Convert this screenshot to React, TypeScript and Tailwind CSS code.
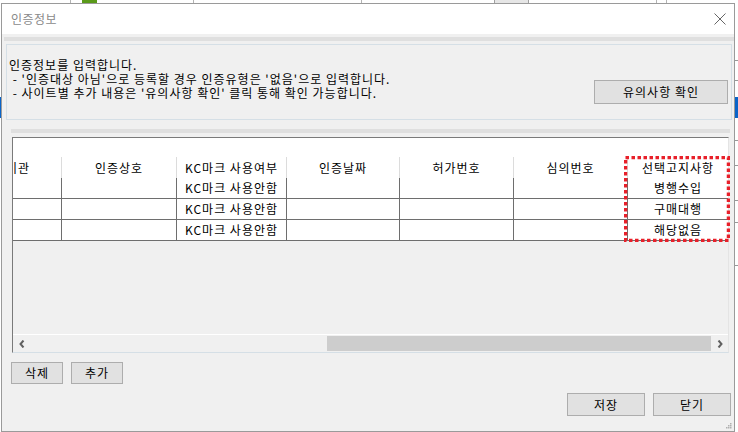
import React from 'react'

const cols = [
  { w: 'w-[49px]', head: '인증기관' },
  { w: 'w-[115px]', head: '인증상호' },
  { w: 'w-[110px]', head: 'KC마크 사용여부' },
  { w: 'w-[113px]', head: '인증날짜' },
  { w: 'w-[114px]', head: '허가번호' },
  { w: 'w-[114px]', head: '심의번호' },
  { w: 'w-[100px]', head: '선택고지사항' },
]

const rows = [
  ['', '', 'KC마크 사용안함', '', '', '', '병행수입'],
  ['', '', 'KC마크 사용안함', '', '', '', '구매대행'],
  ['', '', 'KC마크 사용안함', '', '', '', '해당없음'],
]

function Btn({ label, className }: { label: string; className: string }) {
  return (
    <button className={`flex items-center justify-center bg-[#e1e1e1] border border-[#adadad] text-[12px] tracking-[1px] text-black ${className}`}>
      {label}
    </button>
  )
}

export default function App() {
  return (
    <div className="relative w-[738px] h-[432px] bg-white overflow-hidden pl-[1px] pt-[3px] font-['Noto_Sans_CJK_KR','Noto_Sans',sans-serif]">
      {/* bits of the window behind */}
      <div className="absolute left-[70px] top-0 w-px h-[3px] bg-[#b4b4b4]" />
      <div className="absolute left-[82px] top-0 w-[15px] h-[3px] bg-[#5a9a1a]" />
      <div className="absolute left-[193px] top-0 w-px h-[3px] bg-[#b4b4b4]" />
      <div className="absolute left-[361px] top-0 w-px h-[3px] bg-[#b4b4b4]" />
      <div className="absolute left-[494px] top-0 w-[35px] h-[3px] border-x border-[#a0a0a0] bg-[#e6e6e6]" />
      <div className="absolute left-[656px] top-0 w-px h-[3px] bg-[#b4b4b4]" />
      <div className="absolute left-[666px] top-0 w-px h-[3px] bg-[#b4b4b4]" />
      <div className="absolute left-0 top-[97px] w-px h-[21px] bg-[#0a64c8]" />
      <div className="absolute right-0 top-[97px] w-[3px] h-[21px] bg-[#0a64c8]" />
      <div className="absolute right-0 top-[60px] w-[3px] h-px bg-[#999]" />
      <div className="absolute right-0 top-[80px] w-[3px] h-px bg-[#999]" />
      <div className="absolute right-0 top-[140px] w-[3px] h-px bg-[#999]" />
      <div className="absolute right-0 top-[165px] w-[3px] h-px bg-[#999]" />
      <div className="absolute right-0 top-[200px] w-[3px] h-px bg-[#999]" />
      <div className="absolute right-0 top-[222px] w-[3px] h-px bg-[#999]" />
      <div className="absolute right-0 top-[265px] w-[3px] h-px bg-[#999]" />

      {/* dialog */}
      <div className="relative w-[734px] h-[429px] border border-[#9a9a9a] bg-[#f0f0f0] flex flex-col">
        <div className="h-[30px] bg-white flex items-center justify-between pl-[9px] pr-[8px]">
          <span className="text-[12px] tracking-[0.5px] text-[#8a8a8a]">인증정보</span>
          <svg width="12" height="12" viewBox="0 0 12 12">
            <path d="M0.5 0.5L11.5 11.5M11.5 0.5L0.5 11.5" stroke="#666" strokeWidth="1" />
          </svg>
        </div>

        <div className="mt-[3px] ml-[2px] h-[4px] bg-[#dfdfdf]" />

        <div className="mt-[3px] ml-[4px] mr-[2px] h-[76px] border border-[#d5dfe6] flex justify-between pl-[2px] pr-[3px]">
          <div className="pt-[13px] text-[12px] leading-[14px] tracking-[1px] text-black whitespace-pre">
            <div>인증정보를 입력합니다.</div>
            <div>{" - '인증대상 아님'으로 등록할 경우 인증유형은 '없음'으로 입력합니다."}</div>
            <div>{" - 사이트별 추가 내용은 '유의사항 확인' 클릭 통해 확인 가능합니다."}</div>
          </div>
          <Btn label="유의사항 확인" className="mt-[35px] w-[134px] h-[24px]" />
        </div>

        <div className="mt-[9px] ml-[9px] mr-[4px] h-[4px] bg-[#dfdfdf]" />

        <div className="relative mt-[4px] ml-[10px] w-[717px] h-[216px] border-t border-l border-t-[#7a7a7a] border-l-[#7a7a7a] border-r border-r-[#e4e4e4] border-b border-b-[#d5dfe6] flex flex-col">
          <div className="bg-white">
            <div className="h-[19px]" />
            <div className="flex h-[21px]">
              {cols.map((c, i) => (
                <div
                  key={i}
                  className={`${c.w} flex items-center overflow-hidden whitespace-nowrap text-[12px] tracking-[1px] text-black ${
                    i === 0 ? 'justify-end pr-[31px]' : 'justify-center'
                  } ${i < 6 ? 'border-r border-[#dcdcdc]' : ''}`}
                >
                  <span className="shrink-0">{c.head}</span>
                </div>
              ))}
            </div>
            {rows.map((r, ri) => (
              <div key={ri} className="flex h-[21px] border-b border-[#6e6e6e]">
                {r.map((v, i) => (
                  <div
                    key={i}
                    className={`${cols[i].w} flex items-center justify-center text-[12px] tracking-[1px] text-black whitespace-nowrap ${
                      i < 6 ? 'border-r border-[#6e6e6e]' : ''
                    }`}
                  >
                    {v}
                  </div>
                ))}
              </div>
            ))}
          </div>
          <div className="flex-1" />
          <div className="h-[18px] border-t border-white flex items-center">
            <div className="w-[17px] h-full flex items-center justify-center">
              <svg width="6" height="8" viewBox="0 0 6 8">
                <path d="M4.5 0.5L1.5 4L4.5 7.5" stroke="#606060" strokeWidth="2" fill="none" />
              </svg>
            </div>
            <div className="w-[297px]" />
            <div className="w-[384px] h-[15px] bg-[#cdcdcd]" />
            <div className="w-[17px] h-full flex items-center justify-center">
              <svg width="6" height="8" viewBox="0 0 6 8">
                <path d="M1.5 0.5L4.5 4L1.5 7.5" stroke="#606060" strokeWidth="2" fill="none" />
              </svg>
            </div>
          </div>

          {/* highlight around last column */}
          <svg className="absolute left-[611px] top-[18px]" width="106" height="86" viewBox="0 0 106 86">
            <rect x="1.5" y="1.5" width="103" height="83" fill="none" stroke="#e8202a" strokeWidth="3.5" strokeDasharray="3.5 2.5" />
          </svg>
        </div>

        <div className="mt-[9px] ml-[9px] flex gap-[8px]">
          <Btn label="삭제" className="w-[52px] h-[22px]" />
          <Btn label="추가" className="w-[52px] h-[22px]" />
        </div>

        <div className="mt-[9px] mr-[3px] flex justify-end gap-[8px]">
          <Btn label="저장" className="w-[78px] h-[23px]" />
          <Btn label="닫기" className="w-[78px] h-[23px]" />
        </div>

        <svg className="absolute right-[2px] bottom-[2px]" width="7" height="7" viewBox="0 0 7 7">
          <rect x="5" y="1" width="1.5" height="1.5" fill="#b0b0b0" />
          <rect x="3" y="3" width="1.5" height="1.5" fill="#b0b0b0" />
          <rect x="5" y="3" width="1.5" height="1.5" fill="#b0b0b0" />
          <rect x="1" y="5" width="1.5" height="1.5" fill="#b0b0b0" />
          <rect x="3" y="5" width="1.5" height="1.5" fill="#b0b0b0" />
          <rect x="5" y="5" width="1.5" height="1.5" fill="#b0b0b0" />
        </svg>
      </div>
    </div>
  )
}
